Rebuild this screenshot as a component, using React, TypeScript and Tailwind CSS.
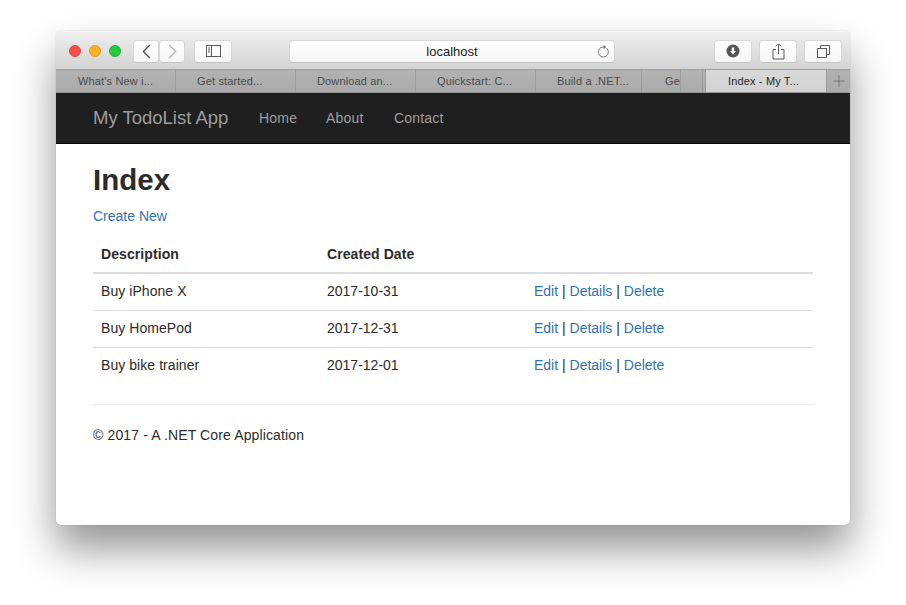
import React from "react";
import { Plus } from "lucide-react";

const Btn = ({ className, children }: { className: string; children?: React.ReactNode }) => (
  <div className={"h-[23px] flex items-center justify-center rounded-[4px] bg-gradient-to-b from-white to-[#f6f6f6] border border-[#d6d6d6] border-b-[#c4c4c4] " + className}>
    {children}
  </div>
);

const Tab = ({ label, w, cls = "" }: { label: string; w: string; cls?: string }) => (
  <div className={"h-full shrink-0 flex items-center pl-[21px] overflow-hidden whitespace-nowrap border-r border-[#9c9c9c] text-[11px] tracking-[0.15px] text-[#4a4a4a] " + w + " " + cls}>
    {label}
  </div>
);

const rows = [
  ["Buy iPhone X", "2017-10-31"],
  ["Buy HomePod", "2017-12-31"],
  ["Buy bike trainer", "2017-12-01"],
];

export default function App() {
  return (
    <div className="w-[906px] h-[605px] bg-white overflow-hidden pt-[31px] pl-[56px] font-['Liberation_Sans',Arial,sans-serif]">
      <div className="w-[794px] h-[494px] rounded-[5px] bg-white overflow-hidden flex flex-col shadow-[0_24px_42px_rgba(0,0,0,0.42),0_0_1px_rgba(0,0,0,0.35)]">
        {/* toolbar */}
        <div className="h-[38px] shrink-0 flex items-center bg-gradient-to-b from-[#eeeeee] to-[#d3d3d3] border-t border-[#f6f6f6] pl-[13px] pr-[8px] pt-[1px]">
          <div className="flex gap-[8px]">
            <div className="w-[12px] h-[12px] rounded-full bg-[#fc4f4d] border border-[#e5443f]" />
            <div className="w-[12px] h-[12px] rounded-full bg-[#fdb024] border border-[#e29d1d]" />
            <div className="w-[12px] h-[12px] rounded-full bg-[#27c93f] border border-[#20b034]" />
          </div>
          <Btn className="w-[26px] ml-[12px]">
            <svg width="9" height="15" viewBox="0 0 9 15" fill="none" stroke="#555555" strokeWidth="1.4">
              <path d="M7.8 1L1.4 7.5L7.8 14" />
            </svg>
          </Btn>
          <Btn className="w-[26px]">
            <svg width="9" height="15" viewBox="0 0 9 15" fill="none" stroke="#b4b4b4" strokeWidth="1.4">
              <path d="M1.2 1L7.6 7.5L1.2 14" />
            </svg>
          </Btn>
          <Btn className="w-[38px] ml-[9px]">
            <svg width="15" height="12" viewBox="0 0 15 12" fill="none" stroke="#5a5a5a">
              <rect x="0.5" y="0.5" width="14" height="11" />
              <path d="M5.5 0.5V11.5M2 3H4M2 5H4M2 7H4" />
            </svg>
          </Btn>
          <Btn className="w-[326px] ml-[57px] relative text-[13px] text-[#1a1a1a] pt-[2px]">
            localhost
            <svg className="absolute right-[4px] top-[3px]" width="14" height="15" viewBox="0 0 14 15" fill="none" stroke="#777777">
              <path d="M10.6 4.2A5 5 0 1 1 7 3H9" />
              <path d="M7.6 0.8L10.2 3L7.6 5.2" fill="#777777" stroke="none" />
            </svg>
          </Btn>
          <Btn className="w-[38px] ml-[99px]">
            <svg width="14" height="14" viewBox="0 0 14 14">
              <circle cx="7" cy="7" r="6.5" fill="#555555" />
              <path d="M5.8 3.5H8.2V7H10L7 10.5L4 7H5.8Z" fill="#ffffff" />
            </svg>
          </Btn>
          <Btn className="w-[38px] ml-[7px]">
            <svg width="13" height="17" viewBox="0 0 13 17" fill="none" stroke="#5a5a5a">
              <path d="M4 6.5H1V16H12V6.5H9" />
              <path d="M6.5 11V1M3.8 3.5L6.5 0.8L9.2 3.5" />
            </svg>
          </Btn>
          <Btn className="w-[38px] ml-[7px]">
            <svg width="13" height="13" viewBox="0 0 13 13" fill="none" stroke="#5a5a5a">
              <rect x="0.5" y="3.5" width="9" height="9" />
              <path d="M3.5 3.5V0.5H12.5V9.5H9.5" />
            </svg>
          </Btn>
        </div>
        {/* tabs */}
        <div className="h-[24px] shrink-0 flex bg-gradient-to-b from-[#b2b2b2] to-[#ababab] border-t border-[#9e9e9e] border-b border-b-[#969696]">
          <Tab label="What's New i..." w="w-[120px]" cls="pl-[22px]" />
          <Tab label="Get started..." w="w-[120px]" />
          <Tab label="Download an..." w="w-[120px]" />
          <Tab label="Quickstart: C..." w="w-[120px]" />
          <Tab label="Build a .NET..." w="w-[106px]" />
          <Tab label="Ge" w="w-[39px]" cls="pl-[23px]" />
          <div className="w-[22px] shrink-0 h-full border-r border-[#9c9c9c]" />
          <div className="w-[3px] shrink-0 h-full border-r border-[#9c9c9c]" />
          <div className="w-[121px] shrink-0 h-full flex items-center pl-[22px] bg-gradient-to-b from-[#d9d9d9] to-[#d2d2d2] border-r border-[#9c9c9c] text-[11px] tracking-[0.15px] text-[#1f1f1f] whitespace-nowrap">
            Index - My T...
          </div>
          <div className="flex-1 flex items-center justify-center">
            <Plus size={18} strokeWidth={0.9} className="text-[#5f5f5f]" />
          </div>
        </div>
        {/* navbar */}
        <div className="h-[51px] shrink-0 flex items-center bg-[#1f1f1f] border-b border-[#080808] pl-[37px]">
          <span className="text-[18.5px] text-[#9d9d9d] w-[166px]">My TodoList App</span>
          <span className="text-[14px] tracking-[0.2px] text-[#9d9d9d] w-[67px]">Home</span>
          <span className="text-[14px] tracking-[0.2px] text-[#9d9d9d] w-[68px]">About</span>
          <span className="text-[14px] tracking-[0.2px] text-[#9d9d9d]">Contact</span>
        </div>
        {/* content */}
        <div className="flex-1 px-[37px] text-[14px] text-[#2b2b2b]">
          <h1 className="text-[29.5px] leading-[33px] font-bold mt-[19px]">Index</h1>
          <a className="block text-[#2f72b3] leading-[20px] mt-[10px]">Create New</a>
          <table className="w-[720px] table-fixed border-collapse mt-[10px]">
            <colgroup>
              <col className="w-[226px]" />
              <col className="w-[207px]" />
              <col />
            </colgroup>
            <thead>
              <tr className="h-[37px] border-b-2 border-[#dddddd]">
                <th className="text-left font-bold px-[8px] tracking-[0.08px]">Description</th>
                <th className="text-left font-bold px-[8px] tracking-[0.08px]">Created Date</th>
                <th />
              </tr>
            </thead>
            <tbody>
              {rows.map(([d, c], i) => (
                <tr key={d} className={"h-[37px] " + (i < 2 ? "border-b border-[#dddddd]" : "")}>
                  <td className="px-[8px] tracking-[0.06px]">{d}</td>
                  <td className="px-[8px]">{c}</td>
                  <td className="px-[8px]">
                    <a className="text-[#2f72b3]">Edit</a> | <a className="text-[#2f72b3]">Details</a> | <a className="text-[#2f72b3]">Delete</a>
                  </td>
                </tr>
              ))}
            </tbody>
          </table>
          <div className="mt-[20px] border-t border-[#eeeeee] pt-[20px] leading-[20px] tracking-[0.13px]">© 2017 - A .NET Core Application</div>
        </div>
      </div>
    </div>
  );
}
